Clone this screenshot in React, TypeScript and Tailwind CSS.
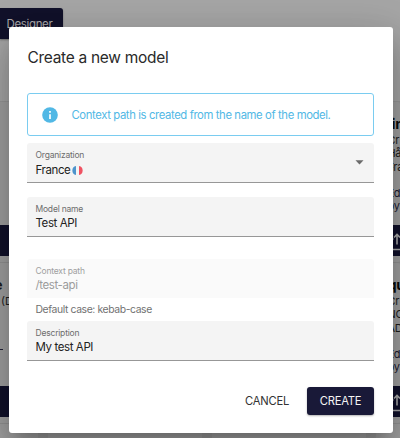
import React from "react";

function Field({
  label,
  value,
  className = "",
  valueClass = "",
  disabled = false,
  children,
}: {
  label: string;
  value: string;
  className?: string;
  valueClass?: string;
  disabled?: boolean;
  children?: React.ReactNode;
}) {
  return (
    <div
      className={`flex flex-col rounded-t-[3px] pr-2 pl-[8.5px] ${
        disabled ? "bg-[#fafafa] text-[#9c9c9c]" : "border-b border-[#979797] bg-[#f4f4f4] text-[#222222]"
      } ${className}`}
    >
      <span className={`mt-[7px] h-[11px] w-max text-[8.5px] leading-[11px] tracking-[-0.2px] ${disabled ? "text-[#a0a0a0]" : "text-[#6c6c6c]"}`}>
        {label}
      </span>
      <div className={`flex h-[16px] items-center ${valueClass}`}>
        <span className="w-max text-[11.5px] leading-[16px] tracking-[-0.4px] whitespace-nowrap">{value}</span>
        {children}
      </div>
    </div>
  );
}

function FranceFlag() {
  return (
    <svg className="ml-[2px]" width="11" height="11" viewBox="0 0 11 11">
      <path d="M4 1A4.6 4.6 0 0 0 4 10Z" fill="#4d94cc" />
      <path d="M7 1A4.6 4.6 0 0 1 7 10Z" fill="#ef5262" />
    </svg>
  );
}

function UploadIcon() {
  return (
    <svg width="20" height="24" viewBox="0 0 20 24" fill="none" stroke="#a9a9a9" strokeWidth="1.6">
      <path d="M10 14.5V4.5M7 7.5l3-3 3 3M0 9h6.5M13.5 9h6.5M0 19.5h20" />
    </svg>
  );
}

function RightCard({
  title,
  titleClass,
  lines,
  className,
}: {
  title: string;
  titleClass: string;
  lines: string[];
  className: string;
}) {
  return (
    <div className={`flex w-[24px] shrink-0 flex-col rounded-[2px] bg-[#a0a0a0] pl-[11.5px] text-[11px] leading-[13.3px] tracking-[-0.3px] text-[#1e1e1e] ${className}`}>
      <div className={`h-[19px] text-[14.5px] leading-[18px] font-bold whitespace-nowrap text-[#0c0c0c] ${titleClass}`}>{title}</div>
      {lines.map((line) => (
        <div key={line} className="whitespace-nowrap">{line}</div>
      ))}
      <div className="mt-[13px] whitespace-nowrap text-[#1c1c30]">Ed</div>
      <div className="whitespace-nowrap text-[#1c1c30]">by</div>
      <div className="mt-auto mb-[6px] -ml-[11.5px] h-[31px] shrink-0 bg-[#11112a] pt-[5px] pl-[10.5px]">
        <UploadIcon />
      </div>
    </div>
  );
}

function MiddleCards({ className }: { className: string }) {
  return (
    <>
      <div className={`w-[154px] shrink-0 bg-[#a0a0a0] ${className}`} />
      <div className={`w-[154px] shrink-0 bg-[#a0a0a0] ${className}`} />
    </>
  );
}

function Backdrop() {
  return (
    <div className="h-full w-full bg-[#a6a6a6]">
      <div className="flex h-[102px] items-start border-b border-[#979797] pt-[7.5px]">
        <div className="flex h-[31px] w-[63px] items-center rounded-r-[3px] bg-[#11112a] pt-[3px] pl-[6.5px] text-[11.5px] tracking-[-0.35px] text-[#aaaaaa] shadow-[0_1px_2px_rgba(0,0,0,0.35)]">
          Designer
        </div>
      </div>
      <div className="flex h-[161px] gap-[10px] border-b border-[#929292] bg-[#999999]">
        <div className="flex w-[38px] shrink-0 flex-col bg-[#a0a0a0]">
          <div className="mt-[123px] h-[31px] bg-[#11112a]" />
        </div>
        <MiddleCards className="h-full" />
        <RightCard title="in" titleClass="ml-[4px]" lines={["Cr", "Hå", "Fra"]} className="h-full pt-[13px]" />
      </div>
      <div className="flex h-[161px] gap-[10px] border-b border-[#929292] bg-[#999999]">
        <div className="flex w-[38px] shrink-0 flex-col bg-[#a0a0a0] text-[#1e1e1e]">
          <div className="mt-[13px] -ml-[6px] h-[18px] text-[14.5px] leading-[18px] font-bold">e</div>
          <div className="h-[14px] pl-[1px] text-[11px] leading-[14px]">(D</div>
          <div className="mt-[41px] h-px w-[3px] bg-[#24243a]" />
          <div className="mt-[36px] h-[31px] bg-[#11112a]" />
        </div>
        <MiddleCards className="h-full" />
        <RightCard title="qu" titleClass="" lines={["Cr", "NO", "AD"]} className="h-full pt-[13px]" />
      </div>
      <div className="flex h-[14px] gap-[10px] bg-[#999999]">
        <div className="w-[38px] shrink-0 bg-[#a0a0a0]" />
        <MiddleCards className="h-full" />
        <div className="w-[24px] shrink-0 bg-[#a0a0a0]" />
      </div>
    </div>
  );
}

export default function App() {
  return (
    <div className="relative h-[438px] w-[400px] overflow-hidden font-['Inter','Liberation_Sans',sans-serif]">
      <Backdrop />
      <div
        role="dialog"
        className="absolute top-[27px] left-[9px] flex h-[406px] w-[383.5px] flex-col rounded-[3px] bg-white pr-[18.5px] pl-[18px] shadow-[0_11px_15px_-7px_rgba(0,0,0,0.2),0_24px_38px_3px_rgba(0,0,0,0.14),0_9px_46px_8px_rgba(0,0,0,0.12)]"
      >
        <h2 className="mt-[19.5px] ml-[0.5px] h-[22px] w-max text-[15.5px] leading-[22px] tracking-[-0.3px] text-[#2a2a2a]">Create a new model</h2>
        <div className="mt-[24.5px] flex h-[43px] shrink-0 items-center rounded-[3px] border border-[#7accf0] pl-[14px] text-[#51b8e5]">
          <svg width="16" height="16" viewBox="0 0 16 16">
            <circle cx="8" cy="8" r="7.8" fill="#51b8e5" />
            <path d="M8 7.2V12M8 4V5.7" stroke="white" strokeWidth="1.7" />
          </svg>
          <span className="mt-[2px] ml-[13.5px] text-[11.3px] tracking-[-0.39px] whitespace-nowrap">Context path is created from the name of the model.</span>
        </div>
        <Field label="Organization" value="France" className="mt-[7px] h-[40px]" valueClass="mt-[1px]">
          <FranceFlag />
          <svg className="mr-[2px] mb-[15px] ml-auto shrink-0" width="9" height="5" viewBox="0 0 9 5">
            <path d="M0.5 0.3h8L4.5 4.4Z" fill="#6b6b6b" />
          </svg>
        </Field>
        <Field label="Model name" value="Test API" className="mt-[14px] h-[40px]" />
        <Field label="Context path" value="/test-api" disabled className="mt-[22px] h-[39px]" />
        <p className="mt-[4px] h-[16px] pl-[8.5px] text-[10.4px] leading-[16px] tracking-[-0.4px] text-[#717171]">Default case: kebab-case</p>
        <Field label="Description" value="My test API" className="mt-[3px] h-[40px]" />
        <div className="mt-[26px] flex h-[28px] items-center justify-end gap-[18px] text-[11.2px] tracking-[-0.2px]">
          <button className="w-[44px] pt-[1px] whitespace-nowrap text-[#333333]">CANCEL</button>
          <button className="h-[28px] w-[67px] rounded-[3px] bg-[#191938] pt-[1px] text-[#f4f4f4] shadow-[0_1px_2px_rgba(0,0,0,0.3)]">CREATE</button>
        </div>
      </div>
    </div>
  );
}
